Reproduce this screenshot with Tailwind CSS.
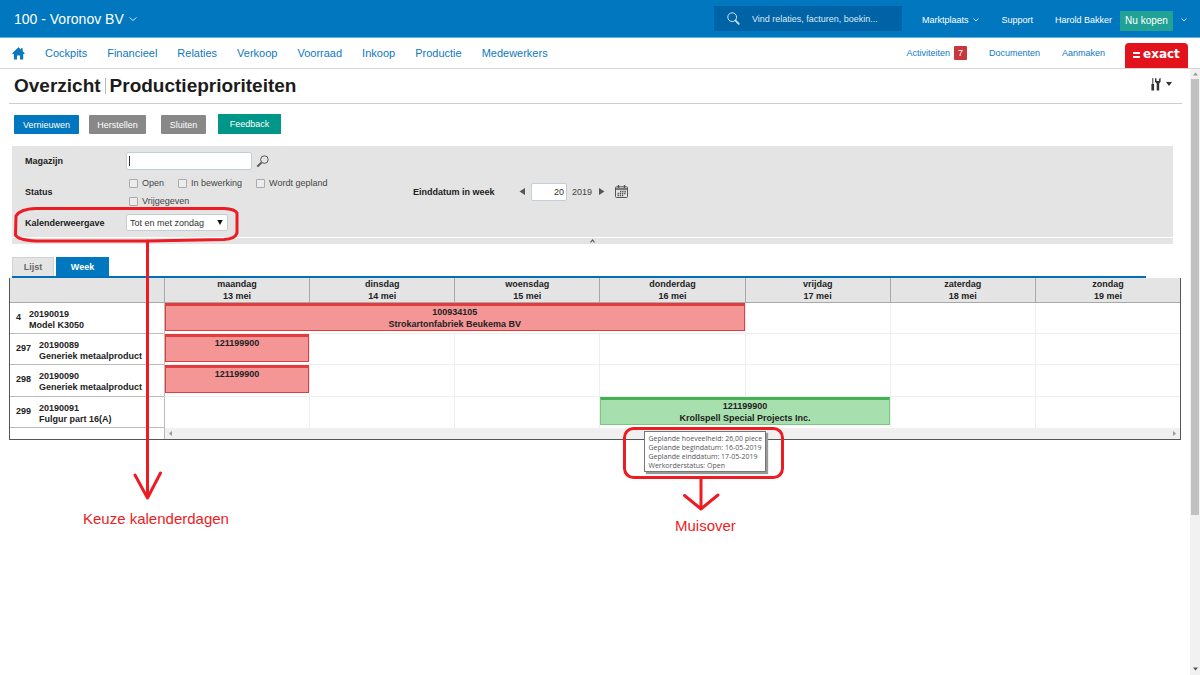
<!DOCTYPE html>
<html lang="nl">
<head>
<meta charset="utf-8">
<meta name="viewport" content="width=device-width, initial-scale=1">
<title>Overzicht Productieprioriteiten</title>
<script src="https://cdn.jsdelivr.net/npm/@tailwindcss/browser@4"></script>
</head>
<body class="relative flex min-h-screen flex-col bg-white font-['Liberation_Sans',Arial,sans-serif] text-[9px] leading-3 text-[#222]">

<header>
  <div class="flex h-[38px] items-center border-b border-[#62aede] bg-[#0077be] pr-[13px] pl-[14px] text-white">
    <button type="button" class="flex items-center gap-[5px] text-sm">100 - Voronov BV
      <svg class="mt-px size-2" viewBox="0 0 8 8" fill="none" stroke="#cde6f5" stroke-width="1"><path d="M.5 2.500 4 5.500 7.500 2.500"/></svg>
    </button>
    <label class="ml-auto flex h-[25px] w-[188px] items-center gap-3 bg-[#0063a6] pl-[13px]">
      <svg class="size-[13px] shrink-0" viewBox="0 0 13 13" fill="none" stroke="#cfe4f3"><circle cx="5.200" cy="5.200" r="4.400" stroke-width="1"/><path d="m8.500 8.500 3.200 3.400" stroke-width="1.800" stroke-linecap="round"/></svg>
      <input type="search" aria-label="Zoeken" placeholder="Vind relaties, facturen, boekin..." class="w-full min-w-0 bg-transparent outline-none placeholder:text-[#d9eaf6]">
    </label>
    <button type="button" class="ml-5 flex items-center gap-[5px] pt-[3px]">Marktplaats
      <svg class="size-[6px]" viewBox="0 0 6 6" fill="none" stroke="#cde6f5"><path d="M.5 1.500 3 4 5.500 1.500"/></svg>
    </button>
    <a href="#" class="ml-[22px] pt-[3px]">Support</a>
    <a href="#" class="ml-[22px] pt-[3px]">Harold Bakker</a>
    <button type="button" class="mt-[5px] ml-2 h-5 w-[53px] bg-[#22a195] text-[10px]">Nu kopen</button>
    <button type="button" aria-label="Meer" class="ml-2 pt-[3px]">
      <svg class="size-[6px]" viewBox="0 0 6 6" fill="none" stroke="#cde6f5"><path d="M.5 1.500 3 4 5.500 1.500"/></svg>
    </button>
  </div>
  <nav class="flex h-[31px] items-center border-b border-[#d4d4d4] pr-3 pl-3 text-[11px] text-[#0e79bf]">
    <a href="#" aria-label="Home" class="mr-5">
      <svg class="h-[13px] w-[13px]" viewBox="0 0 13 13" fill="#0b77bd"><path d="M6.500.3 9 2.600V1.200h1.700v3L12.800 6.200l-.6.800h-1V12.600H8V8.600H5v4H1.900V7H.8l-.6-.8z"/></svg>
    </a>
    <div class="flex gap-5">
      <a href="#">Cockpits</a><a href="#">Financieel</a><a href="#">Relaties</a><a href="#">Verkoop</a><a href="#">Voorraad</a><a href="#">Inkoop</a><a href="#">Productie</a><a href="#">Medewerkers</a>
    </div>
    <div class="ml-auto flex items-center gap-[22px] text-[9px]">
      <a href="#" class="flex items-center gap-1">Activiteiten <span class="h-[14px] w-[13px] rounded-[1px] bg-[#c8373d] text-center leading-[14px] text-white">7</span></a>
      <a href="#">Documenten</a>
      <a href="#">Aanmaken</a>
    </div>
    <a href="#" class="mt-1 ml-5 flex h-[25px] w-[63px] items-center gap-[3px] rounded-t-[4px] bg-[#e2131d] pl-2 text-white">
      <svg class="h-[6px] w-[7px]" viewBox="0 0 7 6" fill="#fff"><path d="M0 0h7v2H0zM0 4h7v2H0z"/></svg>
      <span class="pb-[3px] font-['DejaVu_Sans',sans-serif] text-xs font-bold">exact</span>
    </a>
  </nav>
</header>

<div class="flex flex-1">
  <main class="min-w-0 flex-1">
    <div class="mr-2 ml-[9px] flex h-[35px] items-center border-b border-[#cbcfd1] pr-[10px] pl-[5px]">
      <h1 class="flex items-center gap-1 text-[19px] leading-6 font-bold text-[#1c1c1c]">Overzicht <span class="h-4 w-px bg-[#bbb]"></span> Productieprioriteiten</h1>
      <button type="button" aria-label="Instellingen" class="mb-1 ml-auto flex items-center gap-1">
        <svg class="h-[13px] w-[11px]" viewBox="0 0 11 13" fill="#333"><path d="M1.300 0h1v6h.8v6.500H.4V6h.9zM4 0l1.500.8V3h2.600V.8L9.600 0v3.800L8.200 5.400v7.200H5.700V5.400L4 3.800z"/></svg>
        <svg class="h-1 w-[6px]" viewBox="0 0 6 4" fill="#333"><path d="M0 0h6L3 4z"/></svg>
      </button>
    </div>

    <div class="flex items-end pt-[10px] pl-[14px] text-white">
      <button type="button" class="h-[19px] w-[65px] rounded-[1px] bg-[#0077be]">Vernieuwen</button>
      <button type="button" class="ml-[10px] h-[19px] w-[57px] rounded-[1px] bg-[#888]">Herstellen</button>
      <button type="button" class="ml-[15px] h-[19px] w-[45px] rounded-[1px] bg-[#888]">Sluiten</button>
      <button type="button" class="ml-3 h-5 w-[63px] bg-[#009688]">Feedback</button>
    </div>

    <form class="mt-3 mr-[17px] ml-3">
      <div class="flex h-[91px] items-center bg-[#e4e4e4] pl-[13px]">
        <div class="mt-[6px] grid w-[388px] grid-cols-[101px_1fr] items-center gap-y-1 self-start">
          <label for="magazijn" class="font-bold">Magazijn</label>
          <div class="relative flex items-center gap-1">
            <input id="magazijn" type="text" class="h-[18px] w-[126px] rounded-[2px] border border-[#c3cfd6] bg-white px-1">
            <span class="absolute left-[3px] h-[10px] w-px bg-[#333]"></span>
            <button type="button" aria-label="Magazijn zoeken"><svg class="size-[13px]" viewBox="0 0 13 13" fill="none" stroke="#555"><circle cx="8.400" cy="4.600" r="3.800"/><path d="M5.400 7.600 1.300 11.600" stroke-width="2"/></svg></button>
          </div>
          <span class="font-bold">Status</span>
          <div class="flex flex-wrap gap-x-[14px] pl-[3px] leading-[18px] text-[#444]">
            <label class="flex items-center gap-1"><input type="checkbox" class="size-[9px] appearance-none rounded-[1px] border border-[#aaa] bg-[#ececec]">Open</label>
            <label class="flex items-center gap-1"><input type="checkbox" class="size-[9px] appearance-none rounded-[1px] border border-[#aaa] bg-[#ececec]">In bewerking</label>
            <label class="flex items-center gap-1"><input type="checkbox" class="size-[9px] appearance-none rounded-[1px] border border-[#aaa] bg-[#ececec]">Wordt gepland</label>
            <div class="basis-full"><label class="inline-flex items-center gap-1 align-top"><input type="checkbox" class="size-[9px] appearance-none rounded-[1px] border border-[#aaa] bg-[#ececec]">Vrijgegeven</label></div>
          </div>
          <label for="weergave" class="font-bold">Kalenderweergave</label>
          <div class="relative w-[102px]">
            <select id="weergave" class="block h-[17px] w-full appearance-none rounded-[2px] border border-[#c3cfd6] bg-white pl-[3px] text-[#333]"><option>Tot en met zondag</option></select>
            <svg class="pointer-events-none absolute top-[6px] right-[5px] h-[5px] w-[6px]" viewBox="0 0 6 5" fill="#111"><path d="M.3 0h5.400L3 5z"/></svg>
          </div>
        </div>
        <label for="week" class="w-[106px] font-bold">Einddatum in week</label>
        <button type="button" aria-label="Vorige week"><svg class="h-[7px] w-[6px]" viewBox="0 0 6 7" fill="#555"><path d="M6 0v7L.5 3.500z"/></svg></button>
        <input id="week" type="text" value="20" class="ml-[6px] h-[18px] w-9 rounded-[2px] border border-[#c3cfd6] bg-white pr-[2px] text-right text-[#333]">
        <span class="ml-[5px] w-[27px] text-[#444]">2019</span>
        <button type="button" aria-label="Volgende week"><svg class="h-[7px] w-[6px]" viewBox="0 0 6 7" fill="#555"><path d="M0 0v7l5.500-3.500z"/></svg></button>
        <button type="button" aria-label="Kalender" class="ml-[10px]"><svg class="size-[13px]" viewBox="0 0 13 13" fill="none" stroke="#555"><rect x=".5" y="1.800" width="12" height="10.700" rx="1"/><path d="M1 4h11" stroke-width="1.500"/><path d="M3.500 0v3M9.500 0v3" stroke-width="1.400"/><path d="M5 6.500h6M2.500 8.500H11M2.500 10.500h6" stroke-width="1.300" stroke-dasharray="1.400 .8"/></svg></button>
      </div>
      <button type="button" aria-label="Inklappen" class="mt-px flex h-[6px] w-full items-center justify-center bg-[#e4e4e4]"><svg class="h-1 w-[5px]" viewBox="0 0 5 4" fill="none" stroke="#555" stroke-width="1.200"><path d="M.5 3.500 2.500 1l2 2.500"/></svg></button>
    </form>

    <div class="mt-[13px] mr-11 ml-3 flex gap-[2px] border-b-2 border-[#0070b8]">
      <button type="button" class="h-[19px] w-[42px] border border-b-0 border-[#d2d2d2] bg-[#e4e4e4] font-bold text-[#666]">Lijst</button>
      <button type="button" class="h-[19px] w-[53px] bg-[#0077be] font-bold text-white">Week</button>
    </div>

    <div class="mr-[9px] ml-[9px] border-r border-b border-l border-[#555]">
      <table class="w-full table-fixed border-separate border-spacing-0 font-bold">
        <thead>
          <tr class="h-[25px] bg-[#e4e4e4]">
            <th class="w-[154px] border-b border-[#a8a8a8] p-0"></th>
            <th class="border-b border-l border-[#a8a8a8] p-0">maandag<br>13 mei</th>
            <th class="border-b border-l border-[#a8a8a8] p-0">dinsdag<br>14 mei</th>
            <th class="border-b border-l border-[#a8a8a8] p-0">woensdag<br>15 mei</th>
            <th class="border-b border-l border-[#a8a8a8] p-0">donderdag<br>16 mei</th>
            <th class="border-b border-l border-[#a8a8a8] p-0">vrijdag<br>17 mei</th>
            <th class="border-b border-l border-[#a8a8a8] p-0">zaterdag<br>18 mei</th>
            <th class="border-b border-l border-[#a8a8a8] p-0">zondag<br>19 mei</th>
          </tr>
        </thead>
        <tbody>
          <tr class="h-[31px] align-top">
            <td class="border-b border-[#bbb] p-0"><div class="flex gap-2 pt-[6px] pl-[6px] leading-[11px] whitespace-nowrap"><span class="pt-[3px]">4</span><span>20190019<br>Model K3050</span></div></td>
            <td colspan="4" class="border-b border-l border-b-[#eee] border-l-[#bbb] p-0"><div class="h-7 border border-t-[3px] border-[#e23c3e] bg-[#f59696] text-center">100934105<br>Strokartonfabriek Beukema BV</div></td>
            <td class="border-b border-l border-[#eee]"></td><td class="border-b border-l border-[#eee]"></td><td class="border-b border-l border-[#eee]"></td>
          </tr>
          <tr class="h-[31px] align-top">
            <td class="border-b border-[#bbb] p-0"><div class="flex gap-2 pt-[6px] pl-[6px] leading-[11px] whitespace-nowrap"><span class="pt-[3px]">297</span><span>20190089<br>Generiek metaalproduct</span></div></td>
            <td class="border-b border-l border-b-[#eee] border-l-[#bbb] p-0"><div class="h-7 border border-t-[3px] border-[#e23c3e] bg-[#f59696] text-center">121199900</div></td>
            <td class="border-b border-l border-[#eee]"></td><td class="border-b border-l border-[#eee]"></td><td class="border-b border-l border-[#eee]"></td><td class="border-b border-l border-[#eee]"></td><td class="border-b border-l border-[#eee]"></td><td class="border-b border-l border-[#eee]"></td>
          </tr>
          <tr class="h-8 align-top">
            <td class="border-b border-[#bbb] p-0"><div class="flex gap-2 pt-[6px] pl-[6px] leading-[11px] whitespace-nowrap"><span class="pt-[3px]">298</span><span>20190090<br>Generiek metaalproduct</span></div></td>
            <td class="border-b border-l border-b-[#eee] border-l-[#bbb] p-0"><div class="h-7 border border-t-[3px] border-[#e23c3e] bg-[#f59696] text-center">121199900</div></td>
            <td class="border-b border-l border-[#eee]"></td><td class="border-b border-l border-[#eee]"></td><td class="border-b border-l border-[#eee]"></td><td class="border-b border-l border-[#eee]"></td><td class="border-b border-l border-[#eee]"></td><td class="border-b border-l border-[#eee]"></td>
          </tr>
          <tr class="h-[31px] align-top">
            <td class="border-b border-[#bbb] p-0"><div class="flex gap-2 pt-[6px] pl-[6px] leading-[11px] whitespace-nowrap"><span class="pt-[3px]">299</span><span>20190091<br>Fulgur part 16(A)</span></div></td>
            <td class="border-l border-[#bbb]"></td><td class="border-l border-[#eee]"></td><td class="border-l border-[#eee]"></td>
            <td colspan="2" class="relative border-l border-[#eee] p-0">
              <div class="h-7 border border-t-[3px] border-[#7cc583] border-t-[#43b054] bg-[#a8dfaf] text-center">121199900<br>Krollspell Special Projects Inc.</div>
              <div role="tooltip" class="absolute top-[34px] left-11 z-10 border border-[#777] bg-white px-[3px] pt-[2px] pb-px text-left font-['Open_Sans','Noto_Sans',sans-serif] text-[7px] leading-[9px] font-normal whitespace-nowrap text-[#555] shadow-[2px_2px_1px_#999]">Geplande hoeveelheid: 26,00 piece<br>Geplande begindatum: 16-05-2019<br>Geplande einddatum: 17-05-2019<br>Werkorderstatus: Open</div>
            </td>
            <td class="border-l border-[#eee]"></td><td class="border-l border-[#eee]"></td>
          </tr>
          <tr class="h-[11px]">
            <td class="p-0"></td>
            <td colspan="7" class="border-l border-[#bbb] bg-[#f0f0f0] p-0"><div class="flex justify-between px-1">
              <svg class="h-[5px] w-[3px]" viewBox="0 0 3 5" fill="#999"><path d="M3 0v5L0 2.500z"/></svg>
              <svg class="h-[5px] w-[3px]" viewBox="0 0 3 5" fill="#999"><path d="M0 0v5l3-2.500z"/></svg></div></td>
          </tr>
        </tbody>
      </table>
    </div>
  </main>

  <div class="flex w-[10px] flex-col items-center bg-[#f1f1f1]">
    <svg class="my-[3px] h-1 w-[5px]" viewBox="0 0 5 4" fill="#999"><path d="M0 3.500h5L2.500.5z"/></svg>
    <div class="h-[436px] w-2 bg-[#c1c1c1]"></div>
    <svg class="mt-auto mb-1 h-1 w-[5px]" viewBox="0 0 5 4" fill="#555"><path d="M0 .5h5L2.500 3.500z"/></svg>
  </div>
</div>

<!-- Annotations drawn over the page -->
<svg class="pointer-events-none absolute top-0 left-0 z-20 h-[675px] w-[1200px]" viewBox="0 0 1200 675" fill="none" stroke="#ed1c24" stroke-width="3" stroke-linecap="round" stroke-linejoin="round">
  <path d="M16 216Q20 209 36 208.500H224Q235 209 237 213V233Q235 239 224 239.500L147 241H36Q18 240 15.500 235z"/>
  <path d="M147.500 241V498M135 475l12.500 23L160.500 473"/>
  <rect x="624.500" y="428.500" width="158" height="49" rx="9"/>
  <path d="M701 478v31M684.500 495.500 701 509l17-14"/>
</svg>
<p class="absolute top-[509px] left-[83px] z-20 text-[15px] leading-5 text-[#ed1c24]">Keuze kalenderdagen</p>
<p class="absolute top-[516px] left-[675px] z-20 text-[15px] leading-5 text-[#ed1c24]">Muisover</p>
</body>
</html>
